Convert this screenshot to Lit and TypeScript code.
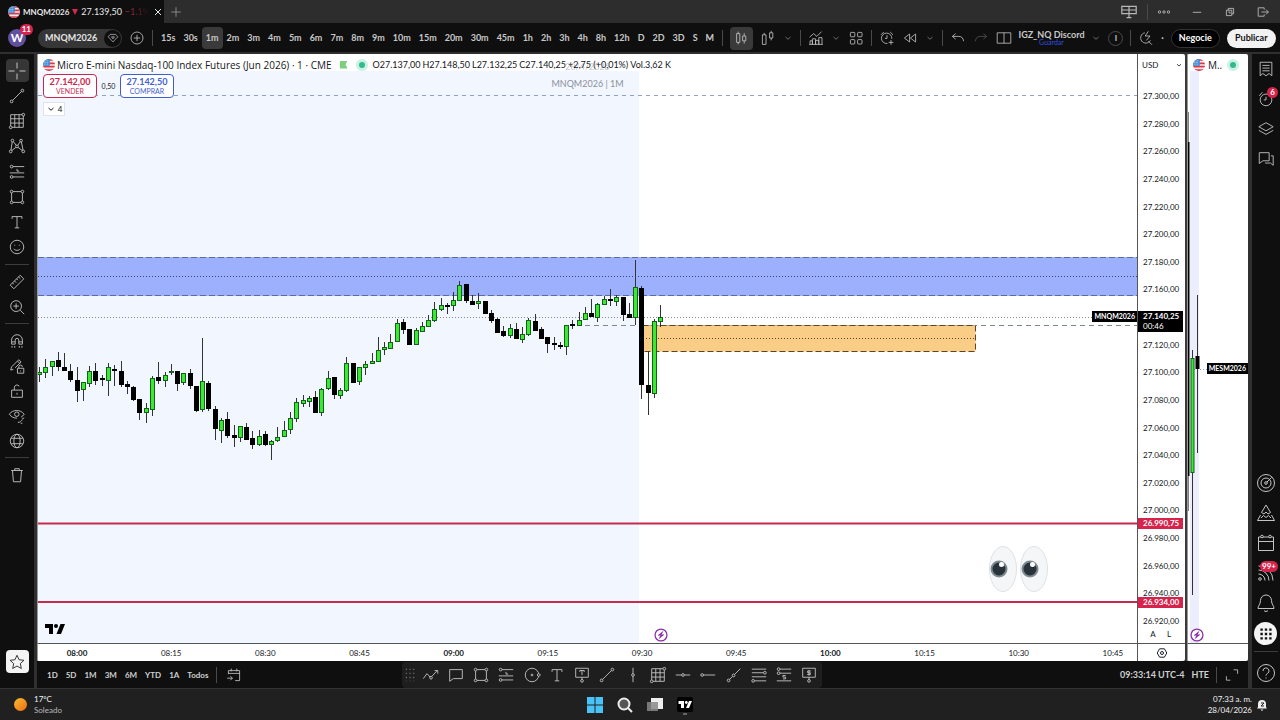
import { LitElement, html, svg, css } from "lit";
import { customElement, property } from "lit/decorators.js";
import { classMap } from "lit/directives/class-map.js";

/* Line icons on a 20 x 20 grid. */
const ICONS: Record<string, unknown> = {
  cross: svg`<path d="M10 1.500v6M10 12.500v6M1.500 10h6M12.500 10h6"/>`,
  trend: svg`<circle cx="4" cy="16" r="1.500"/><circle cx="16" cy="4" r="1.500"/><path d="M5.200 14.800 14.800 5.200"/>`,
  grid: svg`<path d="M3 3h12.500M3 3v12.500M4.500 17H17V4.500M3 7.500h14M3 12.300h14M7.500 3v14M12.300 3v14"/><circle cx="17" cy="3" r="1.500"/><circle cx="3" cy="17" r="1.500"/>`,
  pattern: svg`<circle cx="5" cy="4" r="1.500"/><circle cx="14.500" cy="4" r="1.500"/><circle cx="3" cy="16" r="1.500"/><circle cx="17" cy="16" r="1.500"/><circle cx="10" cy="10.500" r="1.500"/><path d="M4.700 5.500 3.300 14.500M14.900 5.500l1.800 9M6 5.200l3 4M13.600 5.200l-2.700 4M4.300 15l4.500-3.500M15.700 15l-4.500-3.500"/>`,
  forecast: svg`<circle cx="4" cy="4" r="1.500"/><path d="M5.500 4H18M2 11h16M10 6.500v2.500h2.500M5.500 15.500H18"/><circle cx="4" cy="15.500" r="1.500"/>`,
  rect: svg`<circle cx="4" cy="4" r="1.500"/><circle cx="16" cy="4" r="1.500"/><circle cx="4" cy="16" r="1.500"/><circle cx="16" cy="16" r="1.500"/><path d="M5.500 4h9M5.500 16h9M4 5.500v9M16 5.500v9"/>`,
  text: svg`<path d="M4.500 6.500V4h11v2.500M10 4v12.500M7.500 16.500h5"/>`,
  smile: svg`<circle cx="10" cy="10" r="7.500"/><path d="M6.500 12c1.500 2.300 5.500 2.300 7 0M7.500 7.500v1M12.500 7.500v1" />`,
  ruler: svg`<path d="M2.500 13.500 13.500 2.500l4 4-11 11zM5 11l1.500 1.500M7.200 8.800l2 2M9.500 6.500 11 8M11.700 4.300l2 2"/>`,
  zoom: svg`<circle cx="9" cy="9" r="6"/><path d="M13.500 13.500 18 18M9 6v6M6 9h6"/>`,
  magnet: svg`<path d="M4 13.500V9a6 6 0 0 1 12 0v4.500h-4V9a2 2 0 0 0-4 0v4.500zM4 11h4M12 11h4M4.500 15.500v2M7.500 15.500v2M12.500 15.500v2M15.500 15.500v2"/>`,
  penlock: svg`<path d="M3 14.500 4 11 12 3l2.500 2.500L8 12M3 14.500l3-.7M10.500 4.500 13 7M10.500 12.500h7v5.500h-7zM12 12.500v-1.500a2 2 0 0 1 4 0M14 15v1"/>`,
  lock: svg`<path d="M4 9h12v8H4zM7 9V6.500a3 3 0 0 1 5.500-1.800M10 12v2"/>`,
  eye: svg`<path d="M1.500 8C5 2.500 14 2.500 18 8c-1 1.500-2 2.500-3.500 3.300M1.500 8c2 3 5 4.500 8.500 4.300"/><circle cx="9.800" cy="8" r="2.500"/><path d="M11 17c2.500 1 3.500-2.500 5-2.500M15.500 13.500 18 12M14 18h2"/>`,
  globe: svg`<circle cx="10" cy="10" r="7.500"/><ellipse cx="10" cy="10" rx="3.500" ry="7.500"/><path d="M3.500 7h13M3.500 13h13"/>`,
  trash: svg`<path d="M3.500 5h13M7.500 5V3h5v2M5 5l1 12.500h8L15 5"/>`,
  star: svg`<path d="m10 2.500 2.300 5 5.400.6-4 3.700 1.100 5.400L10 14.500l-4.800 2.700 1.100-5.400-4-3.700 5.400-.6z"/>`,
  zigzag: svg`<path d="m1.500 14 4-5.500 3.800 4M11 11.500l5.500-6M14 5h3.500v3.500"/><circle cx="10" cy="13" r="1.500"/>`,
  callout: svg`<path d="M3 4h14v10H7l-4 3z"/>`,
  circle: svg`<circle cx="10" cy="10" r="7.500"/><circle cx="10" cy="10" r="1"/><circle cx="17.500" cy="10" r="1.500" fill="#1e1e1e"/>`,
  textnote: svg`<path d="M3 2.500h14v10H3zM7.500 6.500V5h5v1.500M10 5v5M10 12.500V15"/><circle cx="10" cy="16.500" r="1.500"/>`,
  vline: svg`<path d="M10 2v6.500M10 11.500V18"/><circle cx="10" cy="10" r="1.500"/>`,
  hline: svg`<path d="M2 10h6.500M11.500 10H18"/><circle cx="10" cy="10" r="1.500"/>`,
  hray: svg`<path d="M5 10h13"/><circle cx="3.500" cy="10" r="1.500"/>`,
  ray: svg`<circle cx="4" cy="16" r="1.500"/><circle cx="9.500" cy="10.500" r="1.500"/><path d="m5 15 3.500-3.500M10.500 9.500 17 3"/>`,
  fib: svg`<path d="M2 3.500h16M2 7.500h13M2 12h16M5 16.500h13"/><circle cx="16.500" cy="7.500" r="1.500"/><circle cx="3.500" cy="16.500" r="1.500"/>`,
  position: svg`<path d="M5.500 3.500H18M5.500 8H18M2 16.500h16M11.800 10.500h-3v1.800h3v2h-3"/><circle cx="4" cy="3.500" r="1.500"/><circle cx="4" cy="8" r="1.500"/>`,
  pricenote: svg`<path d="M3 2.500h14v10H3zM12 5.500H8.500v2h3v2H8M10 4.500v6.300M10 12.500V15"/><circle cx="10" cy="16.500" r="1.500"/>`,
  list: svg`<path d="M3.500 2.500h13v15l-3-2.500-3.500 2.500L6.500 15l-3 2.500zM6 6h8M6 9h8M6 12h8"/>`,
  alarm: svg`<circle cx="10" cy="11" r="6.500"/><path d="M10 7.500V11H7.500M2.500 6.500l3.500-4M17.500 6.500l-3.500-4"/>`,
  layers: svg`<path d="m10 3 8 4.500-8 4.500-8-4.500zM2 11.500 10 16l8-4.500"/>`,
  chat: svg`<path d="M2.500 3h11v9h-7l-4 3zM15.500 6.500h2.500v10.500l-3-2.500H9"/>`,
  target: svg`<circle cx="10" cy="10" r="8.500"/><circle cx="10" cy="10" r="5"/><circle cx="10" cy="10" r="1.300"/><path d="m11 9 4.500-4.500"/>`,
  pyramid: svg`<path d="m10 2 4.500 7.500-2.500 1.500-2-2-2 2-2.500-1.500zM4.500 12l-3 5.500h17l-3-5.500M5 15l2.500-2.500 2.500 2 2.500-2L15 15"/>`,
  calendar: svg`<path d="M2.500 4h15v13.500h-15zM2.500 8.500h15"/><circle cx="6" cy="3.500" r="1.300" fill="#0f0f0f"/><circle cx="14" cy="3.500" r="1.300" fill="#0f0f0f"/>`,
  feed: svg`<circle cx="4" cy="16" r="1.300"/><path d="M2.500 11a6.500 6.500 0 0 1 6.500 6.500M2.500 7A10.500 10.500 0 0 1 13 17.500M2.500 3A14.500 14.500 0 0 1 17 17.500"/>`,
  bell: svg`<path d="M10 2a5.500 5.500 0 0 1 5.500 5.500c0 4 2.500 5 2.500 8H2c0-3 2.500-4 2.500-8A5.500 5.500 0 0 1 10 2zM8 17.500c.8 1.300 3.200 1.300 4 0"/>`,
  help: svg`<circle cx="10" cy="10" r="8.500"/><path d="M7 8a3 3 0 1 1 4.500 2.500c-1 .7-1.500 1-1.500 2.200M10 14.500v1"/>`,
  plus: svg`<circle cx="10" cy="10" r="7.500"/><path d="M10 6v8M6 10h8"/>`,
  add: svg`<path d="M10 4v12M4 10h12"/>`,
  chevron: svg`<path d="m5 8 5 4.500L15 8"/>`,
  close: svg`<path d="m4 4 12 12M16 4 4 16"/>`,
  gem: svg`<path d="M5.500 4h9L18 8l-8 8.500L2 8zM7.500 8h5L10 11.500z"/>`,
  candles: svg`<path d="M4.500 4.500h4v11h-4zM6.500 2v2.500M6.500 15.500V18M12 7.500h4v6h-4zM14 4v3.500M14 13.500V17"/>`,
  bars: svg`<path d="M3 6h4.500v12H3zM5.200 3.500V6M12 3.500h4V10h-4zM14 1v2.500M14 10v3"/>`,
  indicators: svg`<path d="m2 9 5-4.500L11 8l6-6M2.500 18v-4.500h3V18M5.500 18v-7h4v7M9.500 18v-5h4v5M13.500 18V9.500h4V18M1.500 18h17"/>`,
  tiles: svg`<rect x="3" y="3" width="5.500" height="5.500" rx="1"/><rect x="12" y="3" width="5.500" height="5.500" rx="1"/><rect x="3" y="12" width="5.500" height="5.500" rx="1"/><rect x="12" y="12" width="5.500" height="5.500" rx="1"/>`,
  alarmadd: svg`<path d="M10.500 16.800A6.500 6.500 0 1 1 16 11M10 6.500V10.500H7.500M2.500 6 6 2.500M17.500 6 14 2.500M15 12.500v6M12 15.500h6"/>`,
  rewind: svg`<path d="M9.500 5v10L3 10zM17 5v10l-6.500-5z"/>`,
  undo: svg`<path d="M7 4.500 3 8l4 3.500M3 8h8c3.500 0 5.500 2 6 6"/>`,
  redo: svg`<path d="M13 4.500 17 8l-4 3.500M17 8H9c-3.500 0-5.500 2-6 6"/>`,
  layout: svg`<path d="M1.500 3.500h17v13h-17zM10 3.500v13"/>`,
  quick: svg`<path d="M8.500 3.500a6.500 6.500 0 1 0 7 9.500M13 14l4.500 4.500M13 1.500l-4 6h6L10.500 13"/>`,
  goto: svg`<path d="M3 9V4.500h14v12.500h-5.500M3 8h14M6.500 2v3.500M13.500 2v3.500M1.500 14H8M5.500 11.500 8 14l-2.500 2.500"/>`,
  expand: svg`<path d="M12 3.500h5v5M8 16.500H3v-5"/>`,
  panes: svg`<path d="M1 3h18v9H1zM10 3v14M7 17h6M1 7.500h18"/>`,
  more: svg`<circle cx="2.500" cy="10" r="2"/><circle cx="10" cy="10" r="2"/><circle cx="17.500" cy="10" r="2"/>`,
  minus: svg`<path d="M3 10.500h14"/>`,
  restore: svg`<path d="M4 7h9v9H4zM7 7V4h9v9h-3M7 10h3v3"/>`,
  exit: svg`<path d="M12 6V3H2v14h10v-3M7.500 10H19M15 6l4 4-4 4"/>`,
  hex: svg`<path d="M6 3h8l4 7-4 7H6l-4-7z"/><circle cx="10" cy="10" r="2.500"/>`,
  bolt: svg`<circle cx="10" cy="10" r="8.500" fill="#fff"/><path d="m12.500 5-6.500 5.500h3.500L7.500 15l6.500-5.500h-3.500z" fill="currentColor" stroke-width="0.800"/>`,
  drag: svg`<path stroke-dasharray="1.500 3" stroke-width="1.500" d="M6 3v14M10 3v14M14 3v14"/>`,
  apps: svg`<path stroke-width="3" d="M3 4.500h3M8.500 4.500h3M14 4.500h3M3 10h3M8.500 10h3M14 10h3M3 15.500h3M8.500 15.500h3M14 15.500h3"/>`,
};

@customElement("line-icon")
class LineIcon extends LitElement {
  @property() name = "";
  static styles = css`
    :host { display: inline-flex; width: 20px; height: 20px; flex: none; }
    .glyph { width: 100%; height: 100%; fill: none; stroke: currentColor; stroke-width: var(--stroke, 1); overflow: visible; }
  `;
  render() {
    return html`<svg class="glyph" viewBox="0 0 20 20" aria-hidden="true">${ICONS[this.name]}</svg>`;
  }
}

@customElement("flag-mark")
class FlagMark extends LitElement {
  static styles = css`
    :host { display: inline-flex; width: 12px; height: 12px; border-radius: 50%; overflow: hidden; flex: none; }
    .flag { width: 100%; height: 100%; }
  `;
  render() {
    return html`<svg class="flag" viewBox="0 0 14 14" role="img" aria-label="US">
      <rect width="14" height="14" fill="#fbe9ea" />
      <path d="M0 1h14M0 5h14M0 9h14M0 13h14" stroke="#d93a4a" stroke-width="2" />
      <rect width="8" height="8" fill="#3f8fd8" />
      <path d="M1 2h6M1 4h6M1 6h6" stroke="#bcdcf5" stroke-width="1" stroke-dasharray="1 1" />
    </svg>`;
  }
}

/* One bar per minute from 07:54: high, body top, body bottom, low, rising. */
const BARS: number[][] = [
  [367,372,375,382,1],[359,367,373,378,1],[361,361,367,376,1],[352,360,367,371,0],[353,367,371,371,0],
  [364,371,380,382,0],[367,380,391,402,0],[382,382,390,401,1],[366,371,384,387,1],[363,371,381,385,0],
  [375,378,380,386,0],[363,367,381,396,1],[365,369,371,386,0],[361,371,385,387,0],[381,384,387,394,0],
  [386,387,400,401,0],[399,399,413,420,0],[403,408,413,423,1],[376,378,410,416,1],[362,377,381,384,0],
  [372,375,381,387,1],[364,371,373,375,1],[371,371,384,391,0],[373,373,383,385,1],[369,373,386,389,0],
  [386,386,411,412,0],[338,381,410,412,1],[381,383,409,411,0],[406,409,429,440,0],[418,420,431,443,1],
  [412,419,436,438,0],[425,435,438,447,0],[426,426,438,442,1],[423,427,440,440,0],[431,438,445,449,0],
  [430,436,445,446,1],[431,434,445,446,0],[440,441,445,460,1],[427,437,441,442,1],[421,430,437,437,1],
  [412,418,430,434,1],[398,402,419,422,1],[395,400,404,407,1],[396,398,402,407,1],[391,397,413,413,0],
  [388,389,413,416,1],[371,378,389,390,1],[377,377,395,399,0],[388,390,396,399,1],[357,363,391,392,1],
  [363,363,383,383,0],[367,367,382,385,1],[361,364,368,375,1],[353,361,364,364,1],[337,350,362,362,1],
  [342,347,350,355,1],[334,342,349,349,1],[319,323,342,342,1],[319,322,330,334,0],[329,329,345,345,0],
  [328,330,345,345,1],[322,326,332,332,1],[315,320,327,327,1],[302,309,321,322,1],[298,305,310,311,1],
  [303,305,306,314,0],[292,300,306,311,1],[281,285,301,301,1],[284,284,301,303,0],[295,301,305,305,0],
  [293,301,304,309,1],[301,301,314,314,0],[310,313,321,323,0],[318,319,333,333,0],[326,331,336,337,0],
  [324,328,336,338,1],[323,329,339,339,0],[327,334,340,343,1],[318,320,335,336,1],[314,321,331,331,0],
  [327,329,339,339,0],[337,337,344,353,0],[337,343,345,350,0],[342,345,347,349,0],[325,325,347,355,1],
  [320,324,325,329,0],[312,320,326,326,1],[307,313,320,320,1],[299,313,317,317,0],[303,304,318,322,1],
  [296,299,305,305,1],[289,299,301,306,0],[295,297,302,306,1],[297,297,315,321,0],[303,314,318,318,0],
  [260,287,318,325,1],[286,288,385,399,0],[351,385,393,415,0],[319,321,394,398,1],[305,317,322,327,1],
];
const BAR_STEP = 6.275;
const TOP = 54;

const bar = (x: number, [hi, open, close, lo, up]: number[]) => svg`
  <path class="wick" d="M${x} ${hi - TOP}V${lo - TOP}" />
  <rect class=${up ? "up" : "down"} x=${x - 2} y=${open - TOP + 0.5} width="4" height=${Math.max(1, close - open - 1)} />`;

const FRAMES = ["15s","30s","1m","2m","3m","4m","5m","6m","7m","8m","9m","10m","15m","20m","30m","45m","1h","2h","3h","4h","8h","12h","D","2D","3D","S","M"];
const PRICES = Array.from({ length: 20 }, (_, i) => {
  const v = 27300 - i * 20;
  return `${Math.floor(v / 1000)}.${String(v % 1000).padStart(3, "0")},00`;
});
const TIMES = ["08:00","08:15","08:30","08:45","09:00","09:15","09:30","09:45","10:00","10:15","10:30","10:45"];
const RANGES = ["1D","5D","1M","3M","6M","YTD","1A","Todos"];
const DRAW = ["drag","zigzag","callout","rect","forecast","circle","text","textnote","trend","vline","grid","hline","hray","ray","fib","position","pricenote"];

@customElement("app-root")
class AppRoot extends LitElement {
  static styles = css`
    :host { display: flex; flex-direction: column; height: 100vh; overflow: hidden; background: #0f0f0f; color: #d0d0d0; font-family: Lato, "Open Sans", sans-serif; font-size: 9px; line-height: 12px; }
    * { box-sizing: border-box; }
    button { display: inline-flex; align-items: center; justify-content: center; padding: 0; border: 0; background: none; color: inherit; font: inherit; flex: none; }
    .sm { width: 12px; height: 12px; }
    .md { width: 16px; height: 16px; }
    .lg { width: 18px; height: 18px; }
    .xs { width: 10px; height: 10px; }

    .tabs { display: flex; height: 23px; background: #2d2d2d; flex: none; }
    .tab { display: flex; align-items: center; gap: 3px; width: 164px; padding: 0 4px 0 8px; background: #0f0f0f; color: #e8e8e8; white-space: nowrap; }
    .tab-name { font-size: 8px; font-weight: 700; }
    .tri { width: 0; border: 3px solid transparent; border-top: 6px solid #d6284f; border-bottom: 0; }
    .fade { color: #c22a4c; -webkit-mask-image: linear-gradient(90deg, #000, transparent); mask-image: linear-gradient(90deg, #000, transparent); }
    .tab-close { margin-left: auto; --stroke: 2; }
    .new-tab { width: 24px; color: #9a9a9a; }
    .window { display: flex; align-items: center; margin-left: auto; gap: 21px; padding-right: 11px; color: #b8b8b8; --stroke: 1.5; }
    .pair { display: flex; align-items: center; gap: 10px; }
    .rule { width: 1px; height: 16px; background: #4a4a4a; flex: none; }

    .bar { display: flex; align-items: center; height: 31px; padding-top: 1px; border-bottom: 2px solid #303030; flex: none; font-weight: 700; color: #c8c8c8; }
    .user { position: relative; width: 18px; height: 18px; margin-left: 8px; border-radius: 50%; background: #62519f; color: #fff; font-size: 12px; }
    .badge { position: absolute; top: -5px; right: -7px; min-width: 11px; height: 11px; padding: 0 2px; border-radius: 6px; background: #d6234c; color: #fff; font-size: 8px; line-height: 11px; font-weight: 700; text-align: center; }
    .symbol { width: 84px; height: 19px; margin-left: 12px; padding: 0 1px 0 7px; border-radius: 10px; background: #363636; justify-content: space-between; color: #e4e4e4; }
    .gem { display: flex; align-items: center; justify-content: center; width: 17px; height: 17px; border-radius: 50%; background: #0f0f0f; }
    .plus { margin: 0 7px; }
    .frames { display: flex; justify-content: space-between; width: 549px; padding-left: 4px; flex: none; }
    .frame { height: 22px; padding: 0 4px; border-radius: 4px; }
    .on { background: #3a3a3a; }
    .tools { display: flex; align-items: center; flex: 1; justify-content: space-between; padding: 0 4px 0 3px; }
    .kind { width: 23px; height: 23px; border-radius: 4px; }
    .layout-name { display: flex; flex-direction: column; align-items: center; line-height: 9px; padding-bottom: 1px; }
    .save { color: #2f50e0; font-size: 7px; line-height: 7px; font-weight: 400; text-decoration: none; }
    .dim { color: #555; }
    .count { width: 15px; height: 15px; border: 1px solid #4a4a4a; border-radius: 50%; font-size: 8px; }
    .trade { width: 49px; height: 19px; border: 1px solid #333; border-radius: 10px; background: #000; color: #fff; }
    .publish { width: 49px; height: 19px; border-radius: 10px; background: #f2f2f2; color: #111; }

    .main { display: flex; flex: 1; min-height: 0; }
    .left { display: flex; flex-direction: column; align-items: center; width: 37px; border-right: 3px solid #303030; padding-top: 4px; flex: none; color: #c4c4c4; }
    .group { display: flex; flex-direction: column; justify-content: space-between; }
    .tall { height: 202px; }
    .tool { width: 23px; height: 25px; border-radius: 4px; }
    .picked { background: #363636; height: 23px; margin: 1px 0; }
    .hr { width: 24px; height: 1px; margin: 4px 0; background: #3c3c3c; flex: none; }
    .fav { width: 23px; height: 23px; margin: auto 0 15px; border-radius: 4px; background: #f4f4f4; color: #222; }

    .centre { display: flex; flex-direction: column; flex: 1; min-width: 0; }
    .charts { display: flex; gap: 2px; flex: 1; min-height: 0; background: #3a3a3a; }
    .chart { display: grid; grid-template: 1fr 18px / 1fr 48px; flex: 1; min-width: 0; background: #fff; color: #131722; border-radius: 2px; overflow: hidden; }
    .plot { position: relative; min-width: 0; overflow: hidden; border-left: 1px solid #999; }
    .canvas { position: absolute; inset: 0; width: 100%; height: 100%; }
    .wick { stroke: #333; stroke-width: 1; }
    .up { fill: #3be832; stroke: #14611a; }
    .down { fill: #000; stroke: #000; }
    .legend { position: absolute; top: 4px; left: 5px; display: flex; align-items: center; white-space: nowrap; height: 13px; }
    .title { margin-left: 2px; font-family: "Open Sans", Lato, sans-serif; font-size: 10px; }
    .open-flag { width: 8px; height: 8px; margin-left: 8px; background: #7bd07f; clip-path: polygon(0 0, 100% 0, 75% 50%, 100% 100%, 0 100%); }
    .live { width: 12px; height: 12px; margin-left: 8px; border: 3px solid #c8f2e4; border-radius: 50%; background: #35b98c; flex: none; }
    .ohlc { display: flex; gap: 2px; margin-left: 5px; }
    .mark { position: absolute; left: 0; right: 0; text-align: center; color: #8b909c; }
    .mark-date { top: 7px; opacity: 0.5; }
    .mark-name { top: 24px; }
    .order { position: absolute; top: 20px; left: 5px; display: flex; align-items: center; font-size: 7px; }
    .deal { flex-direction: column; width: 54px; height: 24px; border: 1px solid; border-radius: 4px; background: #fff; line-height: 9px; }
    .deal-price { font-size: 9px; font-weight: 700; line-height: 10px; }
    .sell { color: #c8284d; }
    .buy { color: #3f5fd0; }
    .spread { width: 23px; text-align: center; }
    .fold { position: absolute; top: 48px; left: 5px; width: 22px; height: 14px; gap: 2px; border: 1px solid #e0e3eb; background: #fff; font-size: 8px; --stroke: 2; }
    .logo { position: absolute; left: 7px; bottom: 8px; width: 20px; height: 12px; }
    .event { position: absolute; width: 14px; height: 14px; color: #8a2da8; --stroke: 1.8; bottom: 1px; }
    .event-a { left: 616px; }
    .event-b { left: 2px; }
    .tag { position: absolute; right: 0; padding: 0 2px; background: #000; color: #fff; font-size: 7px; line-height: 11px; font-weight: 700; }
    .tag-main { top: 257px; }
    .tag-side { top: 309px; }

    .axis { position: relative; border-left: 1px solid #555; font-size: 8px; }
    .unit { position: absolute; top: 4px; left: 2px; width: 44px; height: 14px; padding: 0 2px; border: 0; background: transparent; appearance: none; font: inherit; color: inherit; }
    .unit-arrow { position: absolute; top: 7px; right: 2px; width: 8px; height: 8px; --stroke: 2; }
    .prices { display: flex; flex-direction: column; justify-content: space-between; height: 537px; padding: 0 0 0 5px; margin-top: 36px; }
    .price-tag { position: absolute; left: 0; right: 2px; padding-left: 5px; background: #d6234c; color: #fff; line-height: 11px; font-weight: 700; }
    .now { top: 257px; background: #000; height: 21px; line-height: 10px; }
    .level-a { top: 464px; }
    .level-b { top: 543px; }
    .thin { font-weight: 400; }
    .scale { position: absolute; left: 10px; bottom: 3px; display: flex; gap: 6px; }
    .scale button { width: 10px; }
    .times { display: flex; justify-content: space-between; align-items: center; padding: 0 12px 0 27px; border-top: 1px solid #555; border-left: 1px solid #999; font-size: 8px; }
    .time { width: 24px; text-align: center; }
    .hour { font-weight: 700; }
    .corner { border-top: 1px solid #555; border-left: 1px solid #555; --stroke: 1.6; }
    .side { flex: none; width: 61px; grid-template-columns: 1fr; border-radius: 2px; }
    .side .title { margin-left: 3px; }
    .side .live { margin-left: 5px; }

    .foot { display: grid; grid-template-columns: 365px 420px 1fr; height: 27px; padding-top: 1px; align-items: center; flex: none; font-weight: 700; }
    .ranges { display: flex; align-items: center; gap: 8px; padding-left: 10px; font-size: 8px; }
    .goto { margin-left: 1px; }
    .draw { display: flex; align-items: center; height: 26px; border-radius: 4px; background: #1e1e1e; color: #c4c4c4; }
    .draw button { flex: 1; min-width: 0; }
    .draw button:first-child { flex: none; width: 16px; color: #666; }
    .clock { display: flex; align-items: center; justify-content: flex-end; gap: 7px; padding-right: 8px; white-space: nowrap; }

    .right { display: flex; flex-direction: column; justify-content: space-between; width: 32px; border-left: 4px solid #303030; flex: none; color: #c4c4c4; }
    .rail { position: relative; width: 27px; height: 30px; }
    .rail .badge { top: 3px; right: 1px; }
    .apps { width: 23px; height: 23px; margin: 4px 2px 3px; border-radius: 50%; background: #f4f4f4; color: #111; }
    .right .hr { margin: 3px 2px 6px; }

    .taskbar { position: relative; display: flex; align-items: center; justify-content: space-between; height: 32px; padding: 0 12px 0 14px; border-top: 1px solid #333; background: #202020; font-size: 8px; line-height: 11px; color: #f0f0f0; flex: none; }
    .weather { display: flex; align-items: center; gap: 7px; text-align: left; }
    .sun { width: 13px; height: 13px; border-radius: 50%; background: linear-gradient(135deg, #f8bd35, #ee6c10); }
    .muted { color: #b8b8b8; }
    .apps-row { position: absolute; left: 0; right: 0; display: flex; justify-content: center; gap: 12px; }
    .app { width: 18px; height: 22px; }
    .tray { display: flex; align-items: center; gap: 4px; text-align: right; }
    .pic { display: block; }
  `;

  private btn(icon: string, cls = "", size = "") {
    return html`<button class=${cls} aria-label=${icon}><line-icon class=${size} name=${icon}></line-icon></button>`;
  }

  private mainCanvas() {
    return svg`
      <rect x="0" y="17" width="601" height="100%" fill="#f2f6fe" />
      <path d="M0 41.500H3000" stroke="#8fa2c4" stroke-dasharray="4 4" />
      <rect x="-2" y="203" width="3000" height="39" fill="#9cb0fd" />
      <path d="M0 203.500H3000M0 241.500H3000" stroke="#5d6a9c" stroke-dasharray="6 3" />
      <path d="M0 222.500H3000" stroke="#3d4668" stroke-dasharray="1 2" />
      <path d="M0 263.500H3000" stroke="#888" stroke-dasharray="1 2" />
      <path d="M547 271.500H3000" stroke="#7d859c" stroke-dasharray="5 4" />
      <rect x="604.500" y="271.500" width="333" height="26" fill="#f9cd86" stroke="#5c4520" stroke-dasharray="6 3" />
      <path d="M605 284.500H937" stroke="#5c4520" stroke-dasharray="1 2" />
      <path d="M0 469.500H3000M0 548H3000" stroke="#c62b4e" stroke-width="2" />
      ${BARS.map((b, i) => bar(Math.round(1 + i * BAR_STEP) + 0.5, b))}
      <g fill="#f5f6f8" stroke="#dfe1e4">
        <ellipse cx="965" cy="515" rx="13.500" ry="22.500" /><ellipse cx="996" cy="515" rx="13.500" ry="22.500" />
      </g>
      <g fill="#27323a" stroke="#7d8a92" stroke-width="2">
        <circle cx="961" cy="515" r="7.500" /><circle cx="992" cy="515" r="7.500" />
      </g>
      <g fill="#fff"><circle cx="963.500" cy="510.500" r="2.500" /><circle cx="994.500" cy="510.500" r="2.500" /></g>`;
  }

  private sideCanvas() {
    return svg`
      <rect x="2" y="17" width="9" height="100%" fill="#edeefd" />
      <path d="M0 315.500H60" stroke="#999" stroke-dasharray="1 2" />
      <path d="M0 58V457" stroke="#000" /><path d="M0 88V422" stroke="#000" stroke-width="3" />
      <path class="wick" d="M4.500 296V541M9.500 241V399" />
      <rect class="up" x="3" y="304.500" width="3" height="114" />
      <rect class="down" x="8" y="302.500" width="3" height="12" />`;
  }

  private tv(cls: string, fill: string) {
    return html`<svg class=${cls} viewBox="0 0 20 12" role="img" aria-label="TradingView" fill=${fill}>
      <path d="M0 1h8v10H4V5H0z" /><circle cx="11" cy="3" r="2" /><path d="M15.500 1H20l-4 10h-4.500z" />
    </svg>`;
  }

  render() {
    return html`
      <header class="tabs">
        <div class="tab">
          <flag-mark></flag-mark><span class="tab-name">MNQM2026</span><span class="tri"></span><span>27.139,50</span><span class="fade">−1.1%</span>
          ${this.btn("close", "tab-close", "xs")}
        </div>
        ${this.btn("add", "new-tab", "md")}
        <div class="window">
          <div class="pair">${this.btn("panes", "", "md")}<span class="rule"></span>${this.btn("more", "", "sm")}</div>
          ${this.btn("minus", "", "sm")}${this.btn("restore", "", "sm")}${this.btn("exit", "", "sm")}
        </div>
      </header>

      <nav class="bar">
        <button class="user">W<span class="badge">11</span></button>
        <button class="symbol">MNQM2026<span class="gem"><line-icon class="sm" name="gem"></line-icon></span></button>
        ${this.btn("plus", "plus", "md")}
        <span class="rule"></span>
        <div class="frames">${FRAMES.map((f) => html`<button class=${classMap({ frame: true, on: f === "1m" })}>${f}</button>`)}</div>
        <div class="tools">
          ${this.btn("chevron", "", "xs")}<span class="rule"></span>
          ${this.btn("candles", "kind on", "md")}${this.btn("bars", "", "md")}${this.btn("chevron", "", "xs")}<span class="rule"></span>
          ${this.btn("indicators", "", "md")}${this.btn("chevron", "", "xs")}${this.btn("tiles", "", "md")}<span class="rule"></span>
          ${this.btn("alarmadd", "", "md")}${this.btn("rewind", "", "md")}${this.btn("chevron", "", "xs")}<span class="rule"></span>
          ${this.btn("undo", "", "md")}${this.btn("redo", "dim", "md")}${this.btn("layout", "", "md")}
          <span class="layout-name">IGZ_NQ Discord<a class="save" href="#">Guardar</a></span>
          ${this.btn("chevron", "", "xs")}<button class="count">I</button><span class="rule"></span>
          ${this.btn("quick", "", "md")}<span>·</span>
          <button class="trade">Negocie</button><button class="publish">Publicar</button>
        </div>
      </nav>

      <div class="main">
        <aside class="left">
          <div class="group tall">
            ${this.btn("cross", "tool picked")}${["trend","grid","pattern","forecast","rect","text","smile"].map((n) => this.btn(n, "tool", "lg"))}
          </div>
          <span class="hr"></span>
          <div class="group">${["ruler","zoom"].map((n) => this.btn(n, "tool", "lg"))}</div>
          <span class="hr"></span>
          <div class="group">${["magnet","penlock","lock","eye","globe"].map((n) => this.btn(n, "tool", "lg"))}</div>
          <span class="hr"></span>
          ${this.btn("trash", "tool", "lg")}
          ${this.btn("star", "fav", "lg")}
        </aside>

        <section class="centre">
          <div class="charts">
            <div class="chart">
              <div class="plot">
                <svg class="canvas">${this.mainCanvas()}</svg>
                <div class="mark mark-date">28/4/2026</div>
                <div class="mark mark-name">MNQM2026 | 1M</div>
                <div class="legend">
                  <flag-mark></flag-mark><span class="title">Micro E-mini Nasdaq-100 Index Futures (Jun 2026) · 1 · CME</span>
                  <span class="open-flag"></span><span class="live"></span>
                  <span class="ohlc"><span>O27.137,00</span><span>H27.148,50</span><span>L27.132,25</span><span>C27.140,25</span><span>+2,75 (+0,01%)</span><span>Vol.3,62 K</span></span>
                </div>
                <div class="order">
                  <button class="deal sell"><span class="deal-price">27.142,00</span>VENDER</button>
                  <span class="spread">0,50</span>
                  <button class="deal buy"><span class="deal-price">27.142,50</span>COMPRAR</button>
                </div>
                <button class="fold"><line-icon class="xs" name="chevron"></line-icon>4</button>
                ${this.tv("logo", "#000")}
                <line-icon class="event event-a" name="bolt"></line-icon>
                <span class="tag tag-main">MNQM2026</span>
              </div>
              <div class="axis">
                <select class="unit" aria-label="Moneda"><option>USD</option></select>
                <line-icon class="unit-arrow" name="chevron"></line-icon>
                <div class="prices">${PRICES.map((p) => html`<span>${p}</span>`)}</div>
                <span class="price-tag now">27.140,25<br /><span class="thin">00:46</span></span>
                <span class="price-tag level-a">26.990,75</span>
                <span class="price-tag level-b">26.934,00</span>
                <div class="scale"><button>A</button><button>L</button></div>
              </div>
              <div class="times">${TIMES.map((t) => html`<span class=${classMap({ time: true, hour: t.endsWith("00") })}>${t}</span>`)}</div>
              ${this.btn("hex", "corner", "sm")}
            </div>
            <div class="chart side">
              <div class="plot">
                <svg class="canvas">${this.sideCanvas()}</svg>
                <div class="legend"><flag-mark></flag-mark><span class="title">M..</span><span class="live"></span></div>
                <line-icon class="event event-b" name="bolt"></line-icon>
                <span class="tag tag-side">MESM2026</span>
              </div>
              <div class="times"></div>
            </div>
          </div>
          <footer class="foot">
            <div class="ranges">${RANGES.map((r) => html`<button>${r}</button>`)}<span class="rule"></span>${this.btn("goto", "goto", "md")}</div>
            <div class="draw">${DRAW.map((n) => this.btn(n, "", "lg"))}</div>
            <div class="clock"><span>09:33:14 UTC-4</span><span>HTE</span><span class="rule"></span>${this.btn("expand", "", "md")}</div>
          </footer>
        </section>

        <aside class="right">
          <div class="group">
            ${this.btn("list", "rail", "lg")}
            <button class="rail" aria-label="Alertas"><line-icon class="lg" name="alarm"></line-icon><span class="badge">6</span></button>
            ${this.btn("layers", "rail", "lg")}${this.btn("chat", "rail", "lg")}
          </div>
          <div class="group">
            ${["target","pyramid","calendar"].map((n) => this.btn(n, "rail"))}
            <button class="rail" aria-label="Noticias"><line-icon name="feed"></line-icon><span class="badge">99+</span></button>
            ${this.btn("bell", "rail")}${this.btn("apps", "apps", "md")}
            <span class="hr"></span>
            ${this.btn("help", "rail")}
          </div>
        </aside>
      </div>

      <footer class="taskbar">
        <button class="weather"><span class="sun"></span><span>17°C<br /><span class="muted">Soleado</span></span></button>
        <div class="apps-row">
          <button class="app" aria-label="Inicio"><svg class="pic" width="16" height="16" viewBox="0 0 16 16" fill="#49c2f5"><path d="M0 0h7.500v7.500H0zM8.500 0H16v7.500H8.500zM0 8.500h7.500V16H0zM8.500 8.500H16V16H8.500z" /></svg></button>
          <button class="app" aria-label="Buscar"><svg class="pic" width="16" height="16" viewBox="0 0 16 16" fill="#555" stroke="#eee" stroke-width="2"><circle cx="7" cy="7" r="5.500" /><path d="m11 11 4 4" /></svg></button>
          <button class="app" aria-label="Vista de tareas"><svg class="pic" width="16" height="16" viewBox="0 0 16 16"><path d="M4 1h12v11H4z" fill="#eee" /><path d="M0 5h11v9H0z" fill="#888" opacity=".85" /></svg></button>
          <button class="app" aria-label="TradingView"><svg class="pic" width="16" height="20" viewBox="0 0 16 20"><rect y="2" width="16" height="15" rx="2" fill="#000" /><path d="M1.500 6H7v7H4V9H1.500zM12 6h3l-3 7H9z" fill="#fff" /><circle cx="9.300" cy="7.500" r="1.400" fill="#fff" /><path d="M6 19h4" stroke="#aaa" /></svg></button>
        </div>
        <button class="tray"><span>07:33 a. m.<br />28/04/2026</span><svg class="pic" width="12" height="12" viewBox="0 0 12 12" fill="#eee"><path d="M6 1a4 4 0 0 1 4 4v3l1 1.500H1L2 8V5a4 4 0 0 1 4-4zM4.500 10.500h3L6 12z" /><path d="M5 4h3L5 7h3" fill="none" stroke="#222" /></svg></button>
      </footer>
    `;
  }
}
